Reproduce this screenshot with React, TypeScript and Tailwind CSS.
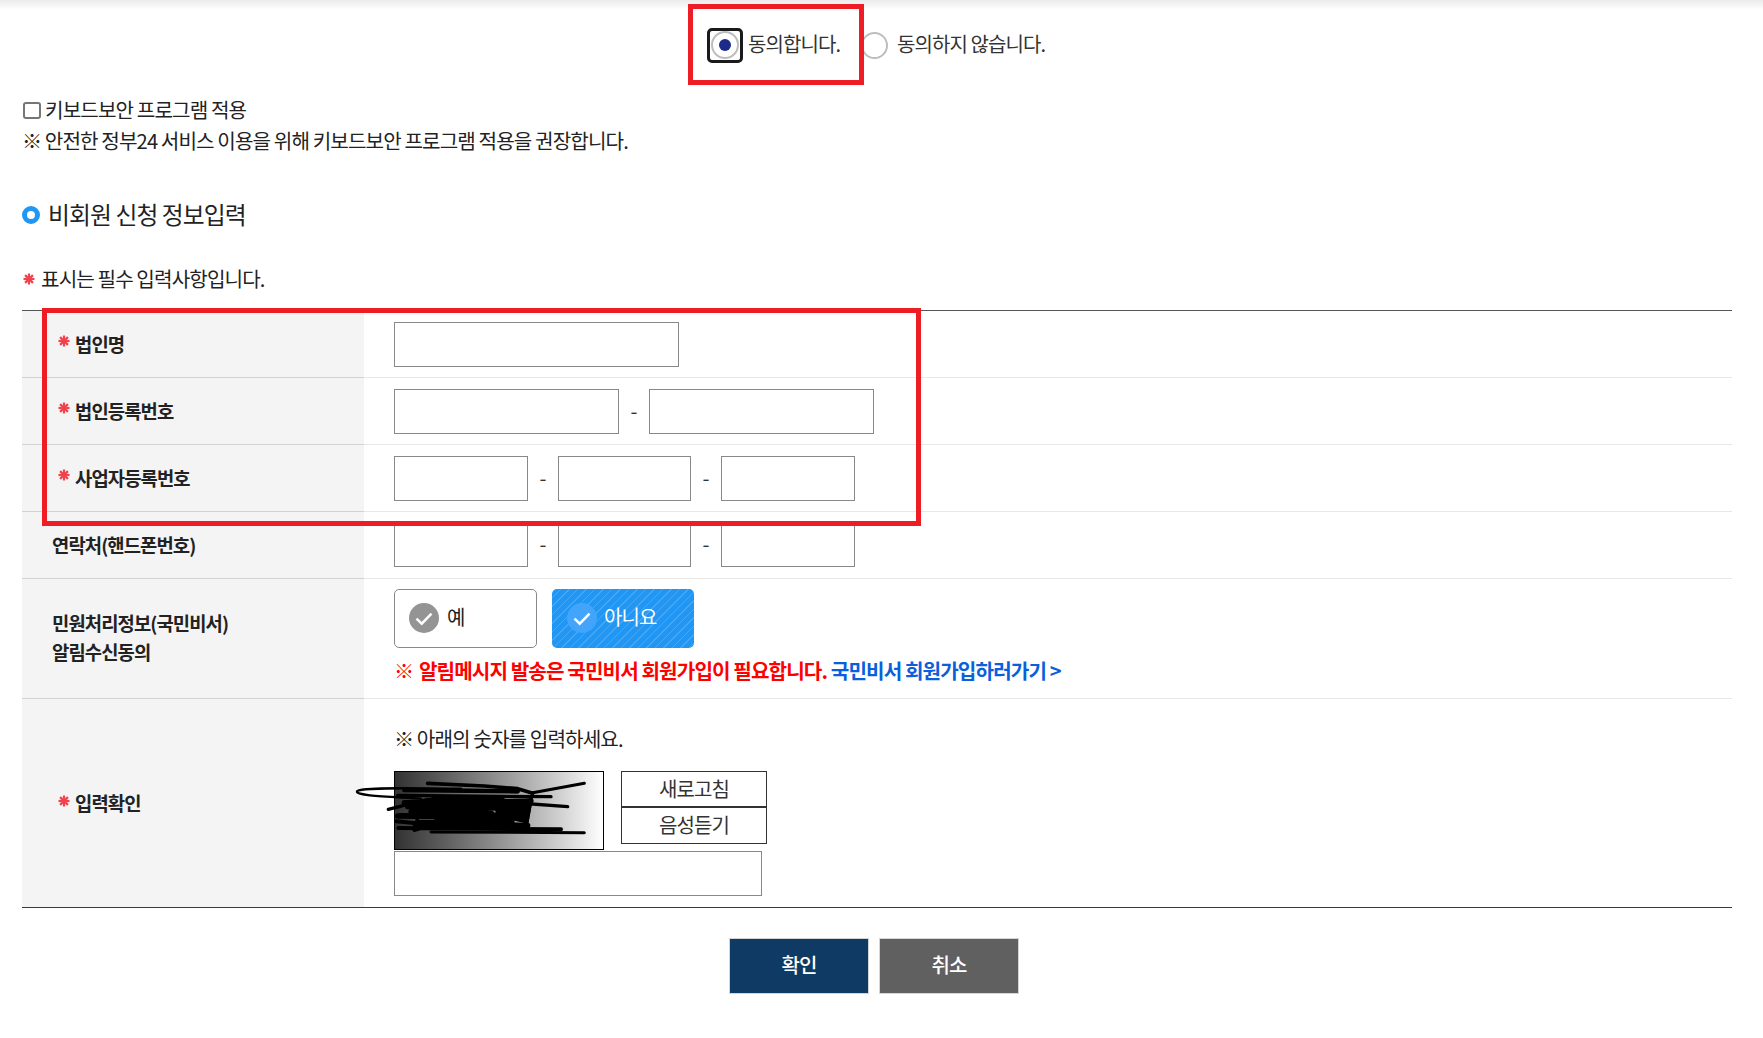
import type { ReactNode } from 'react';

function Star({ className = '' }: { className?: string }) {
  return (
    <svg viewBox="0 0 12 12" className={`h-[12px] w-[12px] shrink-0 ${className}`} stroke="#f0434f" strokeWidth="2.2">
      <line x1="6" y1="0.5" x2="6" y2="11.5" />
      <line x1="0.5" y1="6" x2="11.5" y2="6" />
      <line x1="2.1" y1="2.1" x2="9.9" y2="9.9" />
      <line x1="9.9" y1="2.1" x2="2.1" y2="9.9" />
    </svg>
  );
}

function TextBox({ width }: { width: string }) {
  return <input type="text" className={`h-[45px] shrink-0 border border-[#888888] bg-white ${width}`} />;
}

function Dash() {
  return <span className="flex w-[30px] shrink-0 justify-center pb-[2px] pr-[1px] text-[20px] text-[#333333]">-</span>;
}

function Row({ label, required, children, topPad = 'pt-[11px]' }: { label: ReactNode; required?: boolean; children: ReactNode; topPad?: string }) {
  return (
    <div className="flex">
      <div className="flex w-[342px] shrink-0 items-center border-b border-[#d2d2d2] bg-[#f4f4f4] pb-[2px] pl-[30px] text-[18.8px] font-bold leading-[29px] text-[#222222]">
        {required && <Star className="-mt-[4px] ml-[6px] mr-[5px]" />}
        <div>{label}</div>
      </div>
      <div className={`flex-1 border-b border-[#e8e8e8] pl-[30px] ${topPad}`}>{children}</div>
    </div>
  );
}

function Check({ circle }: { circle: string }) {
  return (
    <span className={`flex h-[30px] w-[30px] items-center justify-center rounded-full ${circle}`}>
      <svg viewBox="0 0 16 16" className="h-[20px] w-[20px]" fill="none" stroke="white" strokeWidth="2">
        <path d="M2 8.5 L6.2 12.5 L14 4.5" />
      </svg>
    </span>
  );
}

function Scribble() {
  return (
    <svg viewBox="0 0 780 270" className="absolute -left-[44px] -top-[6px] h-[90px] w-[260px]" fill="none" stroke="black" strokeWidth="10" strokeLinecap="round" strokeLinejoin="round">
      <path d="M330 68 C200 68 30 62 18 76 C14 90 120 92 210 98" strokeWidth="7" />
      <path d="M230 52 L400 60 L500 68 L545 82" strokeWidth="11" />
      <path d="M545 80 L700 52" strokeWidth="9" />
      <path d="M160 72 L500 76" strokeWidth="14" />
      <path d="M140 88 L600 92" />
      <path d="M112 130 L230 100 L420 105 L650 122" />
      <path d="M160 110 L540 105 L170 122 L520 122 L180 136 L400 136 L140 150 L500 155 L200 170 L530 178" strokeWidth="16" />
      <path d="M250 100 L450 100 L250 118 L410 118 L250 135 L420 145 L260 155 L460 150 L280 172 L480 170" strokeWidth="22" />
      <path d="M430 110 L540 112 L530 170 L440 150 Z" fill="black" strokeWidth="6" />
      <path d="M190 182 L530 184" strokeWidth="12" />
      <path d="M142 186 L630 190" strokeWidth="12" />
      <path d="M240 198 L700 200" strokeWidth="9" />
      <path d="M136 166 L240 176 L190 192" strokeWidth="12" />
      <path d="M215 105 L190 190" strokeWidth="10" />
      <path d="M542 90 L526 175" strokeWidth="10" />
    </svg>
  );
}

export default function App() {
  return (
    <div className="relative h-[1038px] w-[1763px] overflow-hidden bg-white font-['Noto_Sans_CJK_KR',sans-serif] text-[18px] tracking-[-0.05em] text-[#333333]">
      <div className="h-[10px] bg-gradient-to-b from-[#ebebeb] to-white" />

      {/* agree radios */}
      <div className="flex h-[70px] items-center pl-[707px] text-[20px]">
        <span className="flex h-[35px] w-[36px] items-center justify-center rounded-[5px] border-[3px] border-[#1a1a1a]">
          <span className="flex h-[28px] w-[28px] items-center justify-center rounded-full border-2 border-[#bdbdbd] bg-white">
            <span className="h-[12px] w-[12px] rounded-full bg-[#1c2a8c]" />
          </span>
        </span>
        <span className="-mt-[2px] ml-[5px] w-[113px]">동의합니다.</span>
        <span className="h-[27px] w-[27px] rounded-full border-2 border-[#bdbdbd] bg-white" />
        <span className="-mt-[2px] ml-[9px]">동의하지 않습니다.</span>
      </div>

      <div className="pl-[22px] pr-[31px]">
        <div className="mt-[14px] text-[20.15px] leading-[32px] text-[#222222]">
          <div className="flex items-center">
            <input type="checkbox" className="ml-[1px] mr-[4px] h-[17px] w-[18px] appearance-none rounded-[3px] border-2 border-[#767676] bg-white" />
            <span>키보드보안 프로그램 적용</span>
          </div>
          <div className="-mt-[1px]">※ 안전한 정부24 서비스 이용을 위해 키보드보안 프로그램 적용을 권장합니다.</div>
        </div>

        <div className="mt-[42px] flex h-[32px] items-center text-[23.8px] text-[#222222]">
          <span className="mr-[8px] h-[18px] w-[18px] rounded-full border-[5px] border-[#2196f3] bg-white" />
          <span className="-mt-[3px]">비회원 신청 정보입력</span>
        </div>

        <div className="mt-[32px] flex h-[32px] items-center text-[20.15px] text-[#222222]">
          <Star className="ml-[1px] mr-[6px]" />
          <span>표시는 필수 입력사항입니다.</span>
        </div>

        <div className="mt-[15px] border-b border-t border-b-[#3a3a3a] border-t-[#555555]">
          <Row label="법인명" required>
            <div className="h-[55px]">
              <TextBox width="w-[285px]" />
            </div>
          </Row>
          <Row label="법인등록번호" required>
            <div className="flex h-[55px] items-start">
              <TextBox width="w-[225px]" />
              <div className="flex h-[45px] items-center"><Dash /></div>
              <TextBox width="w-[225px]" />
            </div>
          </Row>
          <Row label="사업자등록번호" required>
            <div className="flex h-[55px] items-start">
              <TextBox width="w-[134px]" />
              <div className="flex h-[45px] items-center"><Dash /></div>
              <TextBox width="w-[133px]" />
              <div className="flex h-[45px] items-center"><Dash /></div>
              <TextBox width="w-[134px]" />
            </div>
          </Row>
          <Row label="연락처(핸드폰번호)" topPad="pt-[10px]">
            <div className="flex h-[56px] items-start">
              <TextBox width="w-[134px]" />
              <div className="flex h-[45px] items-center"><Dash /></div>
              <TextBox width="w-[133px]" />
              <div className="flex h-[45px] items-center"><Dash /></div>
              <TextBox width="w-[134px]" />
            </div>
          </Row>
          <Row label={<div className="-mt-[2px]">민원처리정보(국민비서)<br />알림수신동의</div>} topPad="pt-[10px]">
            <div className="flex gap-[15px]">
              <button className="flex h-[59px] w-[143px] items-center gap-[8px] rounded-[5px] border border-[#888888] bg-white pb-[1px] pl-[14px] text-[20px] text-[#222222]">
                <Check circle="bg-[#949494]" />
                <span className="-mt-[3px]">예</span>
              </button>
              <button className="flex h-[59px] w-[142px] items-center gap-[7px] rounded-[5px] bg-[#2196f3] bg-[repeating-linear-gradient(135deg,rgba(255,255,255,0.16)_0,rgba(255,255,255,0.16)_1px,transparent_1px,transparent_6px)] pb-[1px] pl-[15px] text-[20px] text-white">
                <Check circle="bg-[#42a5fb]" />
                <span className="-mt-[3px]">아니요</span>
              </button>
            </div>
            <div className="mt-[7px] h-[43px] text-[20.15px] font-bold leading-[32px] text-[#ff0000]">
              <span className="mr-[2px]">※</span> 알림메시지 발송은 국민비서 회원가입이 필요합니다.{' '}
              <a className="text-[#0a5fdc]">국민비서 회원가입하러가기 &gt;</a>
            </div>
          </Row>
          <div className="flex">
            <div className="flex w-[342px] shrink-0 items-center bg-[#f4f4f4] pl-[30px] text-[18.8px] font-bold text-[#222222]">
              <Star className="-mt-[4px] ml-[6px] mr-[5px]" />
              <span>입력확인</span>
            </div>
            <div className="flex-1 pl-[30px] pt-[24px]">
              <div className="text-[20.15px] leading-[32px] text-[#222222]">※ 아래의 숫자를 입력하세요.</div>
              <div className="mt-[16px] flex h-[80px] items-start">
                <div className="relative h-[79px] w-[210px] border border-black bg-gradient-to-r from-[#333333] to-white">
                  <Scribble />
                </div>
                <div className="ml-[17px] w-[146px] text-center text-[20px] text-[#333333]">
                  <div className="flex h-[36px] items-center justify-center border border-[#333333]">새로고침</div>
                  <div className="flex h-[37px] items-center justify-center border border-[#333333] pb-[2px]">음성듣기</div>
                </div>
              </div>
              <div className="h-[56px]">
                <TextBox width="w-[368px]" />
              </div>
            </div>
          </div>
        </div>

        <div className="ml-[707px] mt-[30px] flex gap-[10px] text-[20px] font-medium text-white">
          <button className="h-[56px] w-[140px] border border-[#d5d5d5] bg-[#0f3a63] pb-[2px]">확인</button>
          <button className="h-[56px] w-[140px] border border-[#d5d5d5] bg-[#606060] pb-[2px]">취소</button>
        </div>
      </div>

      {/* annotation boxes drawn over the form */}
      <div className="absolute left-[688px] top-[4px] h-[81px] w-[176px] border-[5px] border-[#ee1c25]" />
      <div className="absolute left-[42px] top-[308px] h-[218px] w-[879px] border-[5px] border-[#ee1c25]" />
    </div>
  );
}
